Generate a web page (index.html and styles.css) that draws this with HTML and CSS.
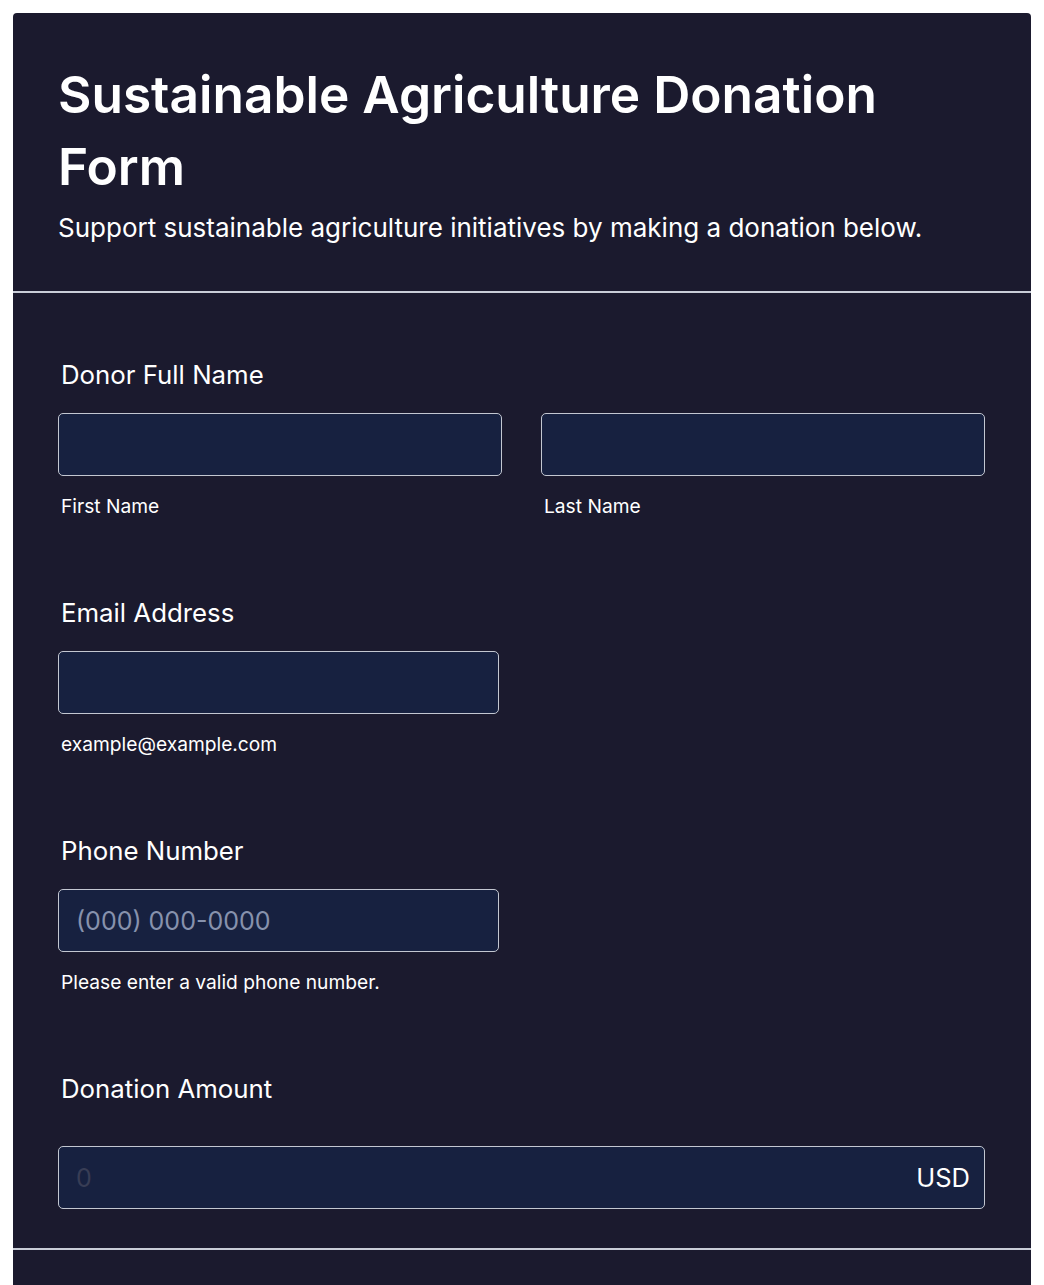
FILE: index.html
```html
<!DOCTYPE html>
<html lang="en">
<head>
  <meta charset="UTF-8">
  <meta name="viewport" content="width=device-width, initial-scale=1">
  <title>Sustainable Agriculture Donation Form</title>
  <link rel="stylesheet" href="styles.css">
</head>
<body>
  <div class="card">
    <div class="header">
      <h1>Sustainable Agriculture Donation Form</h1>
      <p>Support sustainable agriculture initiatives by making a donation below.</p>
    </div>

    <div class="form">
      <div class="field">
        <label class="label">Donor Full Name</label>
        <div class="row">
          <div class="col">
            <input type="text" class="input">
            <span class="sub">First Name</span>
          </div>
          <div class="col">
            <input type="text" class="input">
            <span class="sub">Last Name</span>
          </div>
        </div>
      </div>

      <div class="field">
        <label class="label">Email Address</label>
        <div class="col half">
          <input type="email" class="input">
          <span class="sub">example@example.com</span>
        </div>
      </div>

      <div class="field">
        <label class="label">Phone Number</label>
        <div class="col half">
          <input type="tel" class="input" placeholder="(000) 000-0000">
          <span class="sub">Please enter a valid phone number.</span>
        </div>
      </div>

      <div class="field last">
        <label class="label">Donation Amount</label>
        <div class="amount">
          <input type="text" class="amount-input" placeholder="0">
          <span class="currency">USD</span>
        </div>
      </div>
    </div>

    <div class="footer"></div>
  </div>
</body>
</html>
```

FILE: styles.css
```css
* {
  margin: 0;
  padding: 0;
  box-sizing: border-box;
}

body {
  font-family: Inter, "Noto Sans", Arial, sans-serif;
  background-color: #ffffff;
  padding: 13px 13px 0;
  color: #ffffff;
}

.card {
  background: #1b1a2e;
  border-radius: 4px 4px 0 0;
  min-height: 1272px;
}

.header {
  padding: 45px 45px 44px;
  border-bottom: 2px solid #c9cdd8;
}

h1 {
  font-size: 51.4px;
  font-weight: 600;
  line-height: 72px;
  margin-bottom: 6px;
}

.header p {
  font-size: 26px;
  line-height: 39px;
}

.form {
  padding: 62px 46px 39px 45px;
  border-bottom: 2px solid #c9cdd8;
}

.field {
  margin-bottom: 72px;
}

.field.last {
  margin-bottom: 0;
}

.label {
  display: block;
  font-size: 25.8px;
  line-height: 39px;
  padding-left: 3px;
  margin-bottom: 19px;
}

.field.last .label {
  margin-bottom: 38px;
}

.row {
  display: flex;
  gap: 39px;
}

.col {
  flex: 1;
  display: flex;
  flex-direction: column;
}

.col.half {
  width: 441px;
}

.input {
  height: 63px;
  width: 100%;
  background: #172140;
  border: 1px solid #c3c7d1;
  border-radius: 5px;
  padding: 0 17px;
  font-family: inherit;
  font-size: 25px;
  color: #ffffff;
  outline: none;
}

.input::placeholder {
  color: #8792ad;
}

.sub {
  display: block;
  font-size: 19.2px;
  line-height: 29px;
  padding-left: 3px;
  margin-top: 16px;
}

.amount {
  display: flex;
  align-items: center;
  height: 63px;
  background: #172140;
  border: 1px solid #c3c7d1;
  border-radius: 5px;
  padding: 0 14px 0 17px;
}

.amount-input {
  flex: 1;
  background: transparent;
  border: none;
  outline: none;
  font-family: inherit;
  font-size: 25px;
  color: #ffffff;
}

.amount-input::placeholder {
  color: #383d55;
}

.currency {
  font-size: 25.5px;
}
```
